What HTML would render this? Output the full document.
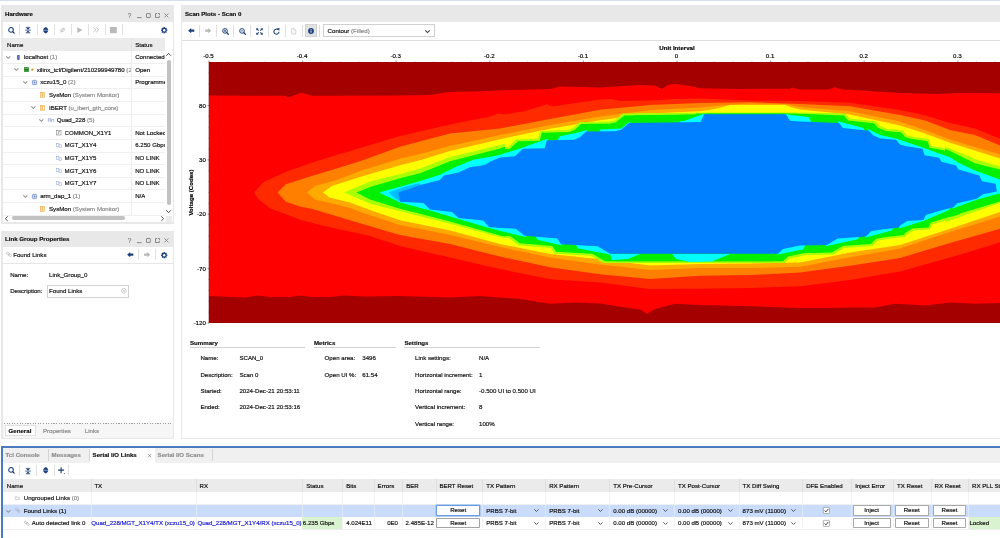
<!DOCTYPE html>
<html><head><meta charset="utf-8"><title>Vivado - Serial I/O Analyzer</title>
<style>

*{box-sizing:border-box}
html,body{margin:0;padding:0}
body{width:1000px;height:538px;overflow:hidden;background:#fff;position:relative;
 font-family:"Liberation Sans",sans-serif;font-size:6.12px;color:#111;line-height:1;-webkit-font-smoothing:antialiased;-webkit-text-stroke:0.18px}
#root{position:absolute;left:0;top:0;width:1000px;height:538px;overflow:hidden;will-change:transform}
#topline{position:absolute;left:0;top:0;width:1000px;height:1.3px;background:#d6deeb}
.abs{position:absolute}
.t{position:absolute;white-space:nowrap;line-height:8px;height:8px}
.b{font-weight:bold}
.g{color:#8a8a8a}
.panel{position:absolute;background:#e8e8e8}
.white{position:absolute;background:#fff}
.ptitle{position:absolute;font-weight:bold;white-space:nowrap;line-height:8px;color:#111}
.vsep{position:absolute;width:0.8px;background:#e0e0e0}
.hline{position:absolute;height:0.6px;background:#efefef}
.hdr{position:absolute;background:#ebebeb}
.colsep{position:absolute;width:0.6px;background:#e3e3e3}
.link{color:#1a1acd}
.btn{position:absolute;height:10.5px;border:0.65px solid #a9a9a9;border-radius:0.8px;background:#fff;text-align:center;line-height:8.7px;font-size:6.12px}
.winic{position:absolute;top:10.2px;color:#8c8c8c}
svg{overflow:visible}

</style></head>
<body>
<div id="root">
<div id="topline"></div>
<div class="panel" style="left:1.2px;top:5.1px;width:173.2px;height:218.6px"></div>
<div class="white" style="left:2.6px;top:22px;width:170.6px;height:199.9px"></div>
<div class="ptitle" style="left:5px;top:9.6px">Hardware</div>
<div class="t " style="left:127.8px;top:11.50px;color:#848484;font-size:6.5px">?</div><svg class="abs" style="left:136.5px;top:17.2px" width="4.6" height="1.2" viewBox="0 0 4.6 1.2"><path d="M0 0.6H4.6" stroke="#848484" stroke-width="0.95"/></svg><svg class="abs" style="left:145.6px;top:12.9px" width="4.8" height="5" viewBox="0 0 4.8 5"><rect x="0.5" y="0.5" width="3.8" height="4" rx="0.4" fill="none" stroke="#848484" stroke-width="0.95"/></svg><svg class="abs" style="left:154.9px;top:12.9px" width="5" height="5" viewBox="0 0 5 5"><path d="M2.1 0.6H0.5V4.5H4.3V2.8" fill="none" stroke="#848484" stroke-width="0.95"/><path d="M2.9 0.5H4.5V2.1" fill="none" stroke="#848484" stroke-width="0.9"/></svg><svg class="abs" style="left:164.0px;top:13.1px" width="4.8" height="4.8" viewBox="0 0 4.8 4.8"><path d="M0.4 0.4L4.4 4.4M4.4 0.4L0.4 4.4" stroke="#848484" stroke-width="0.9"/></svg>
<svg class="abs" style="left:7.699999999999999px;top:26.5px" width="7" height="6.8" viewBox="0 0 7 6.8"><circle cx="3" cy="2.9" r="2.3" fill="none" stroke="#1c3f7c" stroke-width="1.05"/><path d="M4.8 4.7L6.2 6.1" stroke="#1c3f7c" stroke-width="1.3" stroke-linecap="round"/></svg>
<svg class="abs" style="left:25.3px;top:26.799999999999997px" width="6" height="6.2" viewBox="0 0 6 6.2"><path d="M0.7 0.35H5.3M0.7 5.85H5.3" stroke="#1c3f7c" stroke-width="0.7"/><path d="M1 0.7H5L3 2.7ZM1 5.5H5L3 3.5Z" fill="#1c3f7c"/><path d="M0.1 3.1H5.9" stroke="#1c3f7c" stroke-width="0.75"/></svg>
<svg class="abs" style="left:42.599999999999994px;top:26.599999999999998px" width="5.4" height="6.6" viewBox="0 0 5.4 6.6"><path d="M2.7 0.1C4.6 1 5.2 2.3 5.2 3.3C5.2 4.3 4.6 5.6 2.7 6.5C0.8 5.6 0.2 4.3 0.2 3.3C0.2 2.3 0.8 1 2.7 0.1Z" fill="#1c3f7c"/><path d="M0.2 3.3H5.2" stroke="#8ea3cc" stroke-width="0.9"/></svg>
<svg class="abs" style="left:58.6px;top:26.7px" width="7" height="6.4" viewBox="0 0 7 6.4"><ellipse cx="3.5" cy="3.2" rx="1.9" ry="1.4" fill="none" stroke="#b9b9b9" stroke-width="0.8" transform="rotate(-35 3.5 3.2)"/><path d="M0.6 5.9L6.4 0.5" stroke="#b9b9b9" stroke-width="0.55"/></svg>
<svg class="abs" style="left:76.8px;top:26.799999999999997px" width="5.6" height="6.2" viewBox="0 0 5.6 6.2"><path d="M0.3 0.2L5.4 3.1L0.3 6Z" fill="#b9b9b9"/></svg>
<svg class="abs" style="left:93.4px;top:27.2px" width="6.4" height="5.4" viewBox="0 0 6.4 5.4"><path d="M0.4 0.3L2.9 2.7L0.4 5.1M3.3 0.3L5.8 2.7L3.3 5.1" fill="none" stroke="#b9b9b9" stroke-width="0.95"/></svg>
<svg class="abs" style="left:110.4px;top:26.799999999999997px" width="6.8" height="6.2" viewBox="0 0 6.8 6.2"><rect width="6.8" height="6.2" fill="#b9b9b9"/></svg>
<div class="vsep" style="left:19.4px;top:24px;height:10.6px"></div>
<div class="vsep" style="left:36.5px;top:24px;height:10.6px"></div>
<div class="vsep" style="left:53.6px;top:24px;height:10.6px"></div>
<div class="vsep" style="left:70.7px;top:24px;height:10.6px"></div>
<div class="vsep" style="left:87.8px;top:24px;height:10.6px"></div>
<div class="vsep" style="left:104.9px;top:24px;height:10.6px"></div>
<div class="vsep" style="left:122.0px;top:24px;height:10.6px"></div>
<svg class="abs" style="left:160.9px;top:26.8px" width="6.4" height="6.4" viewBox="0 0 6.4 6.4"><g transform="translate(3.2 3.2)"><rect x="-0.7" y="-3.15" width="1.4" height="6.3" transform="rotate(0)" fill="#1c3f7c"/><rect x="-0.7" y="-3.15" width="1.4" height="6.3" transform="rotate(45)" fill="#1c3f7c"/><rect x="-0.7" y="-3.15" width="1.4" height="6.3" transform="rotate(90)" fill="#1c3f7c"/><rect x="-0.7" y="-3.15" width="1.4" height="6.3" transform="rotate(135)" fill="#1c3f7c"/><circle r="2.4" fill="#1c3f7c"/><circle r="1.2" fill="#fff"/></g></svg>
<div class="hdr" style="left:2.6px;top:37.9px;width:162.6px;height:12.7px"></div>
<div class="colsep" style="left:131.1px;top:37.9px;height:177px;background:#ececec"></div>
<div class="colsep" style="left:131.1px;top:37.9px;height:12.7px;background:#e0e0e0"></div>
<div class="t " style="left:7px;top:40.90px;">Name</div>
<div class="t " style="left:135.2px;top:40.90px;">Status</div>
<svg class="abs" style="left:5.968px;top:55.722px" width="4.664000000000001" height="2.7560000000000002" viewBox="0 0 4.4 2.6"><path d="M0.3 0.3L2.2 2.2L4.1 0.3" fill="none" stroke="#909090" stroke-width="0.95"/></svg>
<svg class="abs" style="left:17px;top:54.5px" width="2.8" height="4.8" viewBox="0 0 2.8 4.8"><rect x="0.2" y="0" width="2.4" height="4.8" rx="0.4" fill="#2f4fa0"/><rect x="1" y="0.6" width="0.7" height="2.8" fill="#7f97d4"/></svg>
<div class="t" style="left:24px;top:52.90px;max-width:107.0px;overflow:hidden">localhost <span class="g">(1)</span></div>
<div class="t" style="left:135.2px;top:52.90px;max-width:29.8px;overflow:hidden">Connected</div>
<div class="hline" style="left:2.6px;top:62.95px;width:162.6px"></div>
<svg class="abs" style="left:14.468px;top:68.372px" width="4.664000000000001" height="2.7560000000000002" viewBox="0 0 4.4 2.6"><path d="M0.3 0.3L2.2 2.2L4.1 0.3" fill="none" stroke="#909090" stroke-width="0.95"/></svg>
<svg class="abs" style="left:23.8px;top:67.05px" width="11" height="5" viewBox="0 0 11 5"><rect x="0" y="0.05" width="4.9" height="4.9" fill="#3c9a3c"/><rect x="0.6" y="0.7" width="3.7" height="0.8" fill="#6fbf6f"/><rect x="0.5" y="2.1" width="3.9" height="0.8" fill="#1d5f1d"/><ellipse cx="8.4" cy="2.7" rx="1.35" ry="1" fill="#d9952b" transform="rotate(-30 8.4 2.7)"/></svg>
<div class="t" style="left:36.7px;top:65.55px;max-width:94.3px;overflow:hidden">xilinx_tcf/Digilent/210299949780 <span class="g">(2</span></div>
<div class="t" style="left:135.2px;top:65.55px;max-width:29.8px;overflow:hidden">Open</div>
<div class="hline" style="left:2.6px;top:75.60px;width:162.6px"></div>
<svg class="abs" style="left:22.668px;top:81.022px" width="4.664000000000001" height="2.7560000000000002" viewBox="0 0 4.4 2.6"><path d="M0.3 0.3L2.2 2.2L4.1 0.3" fill="none" stroke="#909090" stroke-width="0.95"/></svg>
<svg class="abs" style="left:31.8px;top:79.7px" width="5" height="5" viewBox="0 0 5 5"><rect x="0.35" y="0.35" width="4.3" height="4.3" rx="1.2" fill="#eef2fb" stroke="#4f70b6" stroke-width="0.7"/><rect x="1.6" y="1.6" width="1.8" height="1.8" fill="#6685c4"/></svg>
<div class="t" style="left:40.2px;top:78.20px;max-width:90.8px;overflow:hidden">xczu15_0 <span class="g">(2)</span></div>
<div class="t" style="left:135.2px;top:78.20px;max-width:29.8px;overflow:hidden">Programme</div>
<div class="hline" style="left:2.6px;top:88.25px;width:162.6px"></div>
<svg class="abs" style="left:40.2px;top:92.05000000000001px" width="4.6" height="5.6" viewBox="0 0 4.6 5.6"><rect x="0.3" y="0.3" width="4" height="5" fill="#fdeccb" stroke="#f0a93f" stroke-width="0.6"/><path d="M2.3 1.2V4.4" stroke="#e8992a" stroke-width="0.7"/><path d="M1.4 1.3H3.2M1.4 4.3H3.2" stroke="#eeb255" stroke-width="0.5"/></svg>
<div class="t" style="left:49px;top:90.85px;max-width:82.0px;overflow:hidden">SysMon <span class="g">(System Monitor)</span></div>
<div class="hline" style="left:2.6px;top:100.90px;width:162.6px"></div>
<svg class="abs" style="left:31.067999999999998px;top:106.322px" width="4.664000000000001" height="2.7560000000000002" viewBox="0 0 4.4 2.6"><path d="M0.3 0.3L2.2 2.2L4.1 0.3" fill="none" stroke="#909090" stroke-width="0.95"/></svg>
<svg class="abs" style="left:40.2px;top:104.7px" width="4.6" height="5.6" viewBox="0 0 4.6 5.6"><rect x="0.3" y="0.3" width="4" height="5" fill="#fdeccb" stroke="#f0a93f" stroke-width="0.6"/><path d="M2.3 1.2V4.4" stroke="#e8992a" stroke-width="0.7"/><path d="M1.4 1.3H3.2M1.4 4.3H3.2" stroke="#eeb255" stroke-width="0.5"/></svg>
<div class="t" style="left:49px;top:103.50px;max-width:82.0px;overflow:hidden">IBERT <span class="g">(u_ibert_gth_core)</span></div>
<div class="hline" style="left:2.6px;top:113.55px;width:162.6px"></div>
<svg class="abs" style="left:39.368px;top:118.972px" width="4.664000000000001" height="2.7560000000000002" viewBox="0 0 4.4 2.6"><path d="M0.3 0.3L2.2 2.2L4.1 0.3" fill="none" stroke="#909090" stroke-width="0.95"/></svg>
<svg class="abs" style="left:47.6px;top:117.85px" width="6.2" height="4.6" viewBox="0 0 6.2 4.6"><path d="M0.3 3.9V0.6H2.7V3.9M3.5 3.9V1.6H5.9V3.9" fill="none" stroke="#8fa3cf" stroke-width="0.7"/><path d="M0.3 2.2H2.7" stroke="#8fa3cf" stroke-width="0.5"/></svg>
<div class="t" style="left:56.8px;top:116.15px;max-width:74.2px;overflow:hidden">Quad_228 <span class="g">(5)</span></div>
<div class="hline" style="left:2.6px;top:126.20px;width:162.6px"></div>
<svg class="abs" style="left:56.4px;top:130.10000000000002px" width="5.4" height="5.4" viewBox="0 0 5.4 5.4"><rect x="0.35" y="0.35" width="4.7" height="4.7" fill="#fff" stroke="#8c8c8c" stroke-width="0.6"/><path d="M1.5 3.9H2.7V1.5H3.9" fill="none" stroke="#6c6c6c" stroke-width="0.6"/></svg>
<div class="t" style="left:64.6px;top:128.80px;max-width:66.4px;overflow:hidden">COMMON_X1Y1</div>
<div class="t" style="left:135.2px;top:128.80px;max-width:29.8px;overflow:hidden">Not Locked</div>
<div class="hline" style="left:2.6px;top:138.85px;width:162.6px"></div>
<svg class="abs" style="left:55.6px;top:142.95000000000002px" width="6" height="5" viewBox="0 0 6 5"><rect x="0.3" y="0.3" width="2.6" height="3" fill="none" stroke="#9fb0d6" stroke-width="0.6"/><rect x="3" y="1.8" width="2.6" height="2.8" fill="none" stroke="#9fb0d6" stroke-width="0.6"/></svg>
<div class="t" style="left:64.6px;top:141.45px;max-width:66.4px;overflow:hidden">MGT_X1Y4</div>
<div class="t" style="left:135.2px;top:141.45px;max-width:29.8px;overflow:hidden">6.250 Gbps</div>
<div class="hline" style="left:2.6px;top:151.50px;width:162.6px"></div>
<svg class="abs" style="left:55.6px;top:155.60000000000002px" width="6" height="5" viewBox="0 0 6 5"><rect x="0.3" y="0.3" width="2.6" height="3" fill="none" stroke="#9fb0d6" stroke-width="0.6"/><rect x="3" y="1.8" width="2.6" height="2.8" fill="none" stroke="#9fb0d6" stroke-width="0.6"/></svg>
<div class="t" style="left:64.6px;top:154.10px;max-width:66.4px;overflow:hidden">MGT_X1Y5</div>
<div class="t" style="left:135.2px;top:154.10px;max-width:29.8px;overflow:hidden">NO LINK</div>
<div class="hline" style="left:2.6px;top:164.15px;width:162.6px"></div>
<svg class="abs" style="left:55.6px;top:168.25000000000003px" width="6" height="5" viewBox="0 0 6 5"><rect x="0.3" y="0.3" width="2.6" height="3" fill="none" stroke="#9fb0d6" stroke-width="0.6"/><rect x="3" y="1.8" width="2.6" height="2.8" fill="none" stroke="#9fb0d6" stroke-width="0.6"/></svg>
<div class="t" style="left:64.6px;top:166.75px;max-width:66.4px;overflow:hidden">MGT_X1Y6</div>
<div class="t" style="left:135.2px;top:166.75px;max-width:29.8px;overflow:hidden">NO LINK</div>
<div class="hline" style="left:2.6px;top:176.80px;width:162.6px"></div>
<svg class="abs" style="left:55.6px;top:180.9px" width="6" height="5" viewBox="0 0 6 5"><rect x="0.3" y="0.3" width="2.6" height="3" fill="none" stroke="#9fb0d6" stroke-width="0.6"/><rect x="3" y="1.8" width="2.6" height="2.8" fill="none" stroke="#9fb0d6" stroke-width="0.6"/></svg>
<div class="t" style="left:64.6px;top:179.40px;max-width:66.4px;overflow:hidden">MGT_X1Y7</div>
<div class="t" style="left:135.2px;top:179.40px;max-width:29.8px;overflow:hidden">NO LINK</div>
<div class="hline" style="left:2.6px;top:189.45px;width:162.6px"></div>
<svg class="abs" style="left:22.668px;top:194.872px" width="4.664000000000001" height="2.7560000000000002" viewBox="0 0 4.4 2.6"><path d="M0.3 0.3L2.2 2.2L4.1 0.3" fill="none" stroke="#909090" stroke-width="0.95"/></svg>
<svg class="abs" style="left:31.8px;top:193.55px" width="5" height="5" viewBox="0 0 5 5"><rect x="0.35" y="0.35" width="4.3" height="4.3" rx="1.2" fill="#eef2fb" stroke="#4f70b6" stroke-width="0.7"/><rect x="1.6" y="1.6" width="1.8" height="1.8" fill="#6685c4"/></svg>
<div class="t" style="left:40.2px;top:192.05px;max-width:90.8px;overflow:hidden">arm_dap_1 <span class="g">(1)</span></div>
<div class="t" style="left:135.2px;top:192.05px;max-width:29.8px;overflow:hidden">N/A</div>
<div class="hline" style="left:2.6px;top:202.10px;width:162.6px"></div>
<svg class="abs" style="left:40.2px;top:205.9px" width="4.6" height="5.6" viewBox="0 0 4.6 5.6"><rect x="0.3" y="0.3" width="4" height="5" fill="#fdeccb" stroke="#f0a93f" stroke-width="0.6"/><path d="M2.3 1.2V4.4" stroke="#e8992a" stroke-width="0.7"/><path d="M1.4 1.3H3.2M1.4 4.3H3.2" stroke="#eeb255" stroke-width="0.5"/></svg>
<div class="t" style="left:49px;top:204.70px;max-width:82.0px;overflow:hidden">SysMon <span class="g">(System Monitor)</span></div>
<div class="hline" style="left:2.6px;top:214.75px;width:162.6px"></div>
<svg class="abs" style="left:166.4px;top:52.8px" width="5.2" height="3" viewBox="0 0 5.2 3"><path d="M0.3 2.7L2.6 0.4L4.9 2.7" fill="none" stroke="#3c3c3c" stroke-width="0.9"/></svg>
<div class="abs" style="left:167.2px;top:60px;width:3.6px;height:145px;background:#c2c2c2;border-radius:1.8px"></div>
<svg class="abs" style="left:166.4px;top:209.6px" width="5.2" height="3" viewBox="0 0 5.2 3"><path d="M0.3 0.3L2.6 2.6L4.9 0.3" fill="none" stroke="#3c3c3c" stroke-width="0.9"/></svg>
<div class="abs" style="left:165.8px;top:215.6px;width:6px;height:6.3px;background:#ebebeb"></div>
<svg class="abs" style="left:5.2px;top:215.9px" width="3" height="5.2" viewBox="0 0 3 5.2"><path d="M2.7 0.3L0.4 2.6L2.7 4.9" fill="none" stroke="#3c3c3c" stroke-width="0.9"/></svg>
<div class="abs" style="left:11.6px;top:216.3px;width:113px;height:3.6px;background:#c2c2c2;border-radius:1.8px"></div>
<svg class="abs" style="left:160.6px;top:215.9px" width="3" height="5.2" viewBox="0 0 3 5.2"><path d="M0.3 0.3L2.6 2.6L0.3 4.9" fill="none" stroke="#3c3c3c" stroke-width="0.9"/></svg>
<div class="panel" style="left:1.2px;top:231px;width:173.2px;height:208px"></div>
<div class="white" style="left:2.6px;top:247px;width:170.6px;height:176.4px"></div>
<div class="abs" style="left:2.6px;top:423.4px;width:170.6px;height:14.2px;background:#f6f6f6"></div>
<div class="ptitle" style="left:5px;top:235px">Link Group Properties</div>
<div class="t " style="left:127.8px;top:236.60px;color:#848484;font-size:6.5px">?</div><svg class="abs" style="left:136.5px;top:242.29999999999998px" width="4.6" height="1.2" viewBox="0 0 4.6 1.2"><path d="M0 0.6H4.6" stroke="#848484" stroke-width="0.95"/></svg><svg class="abs" style="left:145.6px;top:238.0px" width="4.8" height="5" viewBox="0 0 4.8 5"><rect x="0.5" y="0.5" width="3.8" height="4" rx="0.4" fill="none" stroke="#848484" stroke-width="0.95"/></svg><svg class="abs" style="left:154.9px;top:238.0px" width="5" height="5" viewBox="0 0 5 5"><path d="M2.1 0.6H0.5V4.5H4.3V2.8" fill="none" stroke="#848484" stroke-width="0.95"/><path d="M2.9 0.5H4.5V2.1" fill="none" stroke="#848484" stroke-width="0.9"/></svg><svg class="abs" style="left:164.0px;top:238.2px" width="4.8" height="4.8" viewBox="0 0 4.8 4.8"><path d="M0.4 0.4L4.4 4.4M4.4 0.4L0.4 4.4" stroke="#848484" stroke-width="0.9"/></svg>
<svg class="abs" style="left:6.2px;top:252.2px" width="6" height="4.8" viewBox="0 0 6 4.8"><rect x="0.3" y="0.5" width="3.2" height="2" rx="1" fill="none" stroke="#a9a9a9" stroke-width="0.6" transform="rotate(35 1.9 1.5)"/><rect x="2.4" y="2.2" width="3.2" height="2" rx="1" fill="none" stroke="#a9a9a9" stroke-width="0.6" transform="rotate(35 4 3.2)"/></svg>
<div class="t " style="left:13.2px;top:250.60px;">Found Links</div>
<svg class="abs" style="left:126.99999999999999px;top:252.0px" width="6.4" height="5.4" viewBox="0 0 6.4 5.4"><path d="M0.1 2.7L3.2 0.1V1.55H6.3V3.85H3.2V5.3Z" fill="#1c3f7c"/></svg>
<svg class="abs" style="left:143.8px;top:252.0px" width="6.4" height="5.4" viewBox="0 0 6.4 5.4"><path d="M6.3 2.7L3.2 0.1V1.55H0.1V3.85H3.2V5.3Z" fill="#b9b9b9"/></svg>
<svg class="abs" style="left:160.9px;top:251.5px" width="6.4" height="6.4" viewBox="0 0 6.4 6.4"><g transform="translate(3.2 3.2)"><rect x="-0.7" y="-3.15" width="1.4" height="6.3" transform="rotate(0)" fill="#1c3f7c"/><rect x="-0.7" y="-3.15" width="1.4" height="6.3" transform="rotate(45)" fill="#1c3f7c"/><rect x="-0.7" y="-3.15" width="1.4" height="6.3" transform="rotate(90)" fill="#1c3f7c"/><rect x="-0.7" y="-3.15" width="1.4" height="6.3" transform="rotate(135)" fill="#1c3f7c"/><circle r="2.4" fill="#1c3f7c"/><circle r="1.2" fill="#fff"/></g></svg>
<div class="vsep" style="left:138px;top:249.4px;height:10.4px"></div>
<div class="vsep" style="left:155px;top:249.4px;height:10.4px"></div>
<div class="abs" style="left:2.6px;top:263.1px;width:170.6px;height:0.6px;background:#e6e6e6"></div>
<div class="t " style="left:10.2px;top:271.20px;">Name:</div>
<div class="t " style="left:49px;top:271.20px;">Link_Group_0</div>
<div class="t " style="left:10.2px;top:287.20px;">Description:</div>
<div class="abs" style="left:47.3px;top:284.5px;width:81.9px;height:13px;border:0.7px solid #d2d2d2;background:#fff"></div>
<div class="t " style="left:49px;top:287.20px;">Found Links</div>
<svg class="abs" style="left:121.2px;top:288.4px" width="5.6" height="5.6" viewBox="0 0 5.6 5.6"><circle cx="2.8" cy="2.8" r="2.4" fill="none" stroke="#b0b0b0" stroke-width="0.6"/><path d="M1.7 1.7L3.9 3.9M3.9 1.7L1.7 3.9" stroke="#b0b0b0" stroke-width="0.6"/></svg>
<div class="abs" style="left:4.6px;top:424.5px;width:31.2px;height:11.4px;background:#fff;border:0.5px solid #e0e0e0"></div>
<div class="abs" style="left:3.6px;top:423.2px;width:167.6px;height:0.7px;background:repeating-linear-gradient(90deg,#9c9c9c 0,#9c9c9c 1.1px,transparent 1.1px,transparent 2.6px)"></div>
<div class="t b" style="left:8.6px;top:426.50px;">General</div>
<div class="t g" style="left:43px;top:426.50px;">Properties</div>
<div class="t g" style="left:84.8px;top:426.50px;">Links</div>
<div class="panel" style="left:180.8px;top:5.1px;width:830px;height:433.9px"></div>
<div class="white" style="left:182.2px;top:22px;width:830px;height:415.6px"></div>
<div class="ptitle" style="left:185px;top:9.6px">Scan Plots - Scan 0</div>
<svg class="abs" style="left:187.8px;top:28.3px" width="6.4" height="5.4" viewBox="0 0 6.4 5.4"><path d="M0.1 2.7L3.2 0.1V1.55H6.3V3.85H3.2V5.3Z" fill="#1c3f7c"/></svg>
<svg class="abs" style="left:204.60000000000002px;top:28.3px" width="6.4" height="5.4" viewBox="0 0 6.4 5.4"><path d="M6.3 2.7L3.2 0.1V1.55H0.1V3.85H3.2V5.3Z" fill="#b9b9b9"/></svg>
<svg class="abs" style="left:221.8px;top:27.6px" width="7" height="6.8" viewBox="0 0 7 6.8"><circle cx="3" cy="2.9" r="2.35" fill="none" stroke="#1c3f7c" stroke-width="0.95"/><path d="M4.9 4.8L6.3 6.2" stroke="#1c3f7c" stroke-width="1.3" stroke-linecap="round"/><path d="M1.7 2.9H4.3" stroke="#1c3f7c" stroke-width="0.75"/><path d="M3 1.6V4.2" stroke="#1c3f7c" stroke-width="0.75"/></svg>
<svg class="abs" style="left:238.9px;top:27.6px" width="7" height="6.8" viewBox="0 0 7 6.8"><circle cx="3" cy="2.9" r="2.35" fill="none" stroke="#1c3f7c" stroke-width="0.95"/><path d="M4.9 4.8L6.3 6.2" stroke="#1c3f7c" stroke-width="1.3" stroke-linecap="round"/><path d="M1.7 2.9H4.3" stroke="#1c3f7c" stroke-width="0.75"/></svg>
<svg class="abs" style="left:256.0px;top:27.5px" width="7" height="7" viewBox="0 0 7 7"><g transform="scale(1.1667)"><path d="M0.2 0.2H2.2L1.5 0.9L2.6 2L2 2.6L0.9 1.5L0.2 2.2ZM5.8 0.2V2.2L5.1 1.5L4 2.6L3.4 2L4.5 0.9L3.8 0.2ZM0.2 5.8V3.8L0.9 4.5L2 3.4L2.6 4L1.5 5.1L2.2 5.8ZM5.8 5.8H3.8L4.5 5.1L3.4 4L4 3.4L5.1 4.5L5.8 3.8Z" fill="#1c3f7c"/></g></svg>
<svg class="abs" style="left:273.1px;top:27.5px" width="7" height="7" viewBox="0 0 7 7"><path d="M6 3.7A2.55 2.55 0 1 1 5 1.6" fill="none" stroke="#1c3f7c" stroke-width="1.05"/><path d="M3.9 0.1L6.6 0.3L6.2 3Z" fill="#1c3f7c"/></svg>
<svg class="abs" style="left:290.59999999999997px;top:27.8px" width="5.2" height="6.4" viewBox="0 0 5.2 6.4"><path d="M0.4 0.4H3L4.8 2.2V6H0.4Z" fill="#f7f7f7" stroke="#c4c4c4" stroke-width="0.6"/><path d="M3 0.4V2.2H4.8" fill="none" stroke="#c4c4c4" stroke-width="0.5"/></svg>
<div class="abs" style="left:305.2px;top:24.3px;width:11.4px;height:13.2px;background:#e2e2e2;border:0.5px solid #d2d2d2"></div>
<svg class="abs" style="left:307.8px;top:28px" width="6" height="6" viewBox="0 0 6 6"><circle cx="3" cy="3" r="2.9" fill="#1c3f7c"/><rect x="2.55" y="2.5" width="0.9" height="2.2" fill="#fff"/><rect x="2.55" y="1.2" width="0.9" height="0.9" fill="#fff"/></svg>
<div class="vsep" style="left:198.8px;top:24.8px;height:12px"></div>
<div class="vsep" style="left:216.0px;top:24.8px;height:12px"></div>
<div class="vsep" style="left:233.1px;top:24.8px;height:12px"></div>
<div class="vsep" style="left:250.3px;top:24.8px;height:12px"></div>
<div class="vsep" style="left:267.5px;top:24.8px;height:12px"></div>
<div class="vsep" style="left:284.7px;top:24.8px;height:12px"></div>
<div class="vsep" style="left:301.8px;top:24.8px;height:12px"></div>
<div class="vsep" style="left:319.0px;top:24.8px;height:12px"></div>
<div class="abs" style="left:323.3px;top:23.9px;width:111.8px;height:13.6px;border:0.7px solid #d0d0d0;background:#fff"></div>
<div class="t " style="left:327.6px;top:27.00px;">Contour <span class="g">(Filled)</span></div>
<svg class="abs" style="left:425.07000000000005px;top:29.904999999999998px" width="5.06" height="2.9899999999999998" viewBox="0 0 4.4 2.6"><path d="M0.3 0.3L2.2 2.2L4.1 0.3" fill="none" stroke="#3a3a3a" stroke-width="0.9"/></svg>
<div class="abs" style="left:182px;top:39.5px;width:830px;height:0.6px;background:#dedede"></div>
<svg id="plot" width="1000" height="538" viewBox="0 0 1000 538" style="position:absolute;left:0;top:0">
<defs><clipPath id="pc"><rect x="209" y="62" width="800" height="261"/></clipPath></defs>
<g clip-path="url(#pc)">
<rect x="209" y="62" width="800" height="261" fill="#ff0000"/>
<polygon fill="#a50000" points="209,62 209.0,95.5 285.0,95.8 288.0,97.5 301.0,92.8 312.0,95.8 400.0,95.5 430.0,95.0 449.0,92.0 475.0,91.5 512.0,90.0 550.0,89.0 560.0,86.5 600.0,87.6 640.0,85.0 655.0,85.5 662.0,88.9 668.0,85.0 675.0,83.7 690.0,86.0 700.0,88.2 740.0,88.9 790.0,88.8 792.0,87.5 800.0,89.5 828.0,89.5 835.0,87.2 842.0,89.5 850.0,89.8 875.0,91.5 900.0,93.0 937.0,94.0 960.0,93.0 1000.0,93.2 1000,62"/>
<polygon fill="#a50000" points="209,323 209.0,296.0 245.0,297.5 258.0,295.5 270.0,297.0 290.0,297.0 300.0,295.5 312.0,297.0 330.0,297.0 345.0,295.5 365.0,296.5 400.0,296.0 450.0,297.5 480.0,296.0 520.0,299.0 550.0,303.8 575.0,302.5 600.0,303.5 625.0,307.5 640.0,309.5 647.0,313.8 655.0,309.0 675.0,303.8 700.0,305.0 750.0,306.3 800.0,308.0 825.0,308.0 850.0,307.5 875.0,307.5 895.0,303.8 910.0,304.5 925.0,305.5 950.0,302.5 975.0,303.8 1000.0,303.0 1000,323"/>
<clipPath id="cy"><rect x="374" y="140" width="131" height="100"/><rect x="988" y="170" width="30" height="40"/><polygon points="489.9,165.2 501.9,139.8 524.0,139.8 524.0,165.2"/><polygon points="519.6,157.3 531.6,131.2 547.8,131.2 547.8,157.3"/><polygon points="554.5,146.5 566.5,122.6 587.2,122.6 587.2,146.5"/><polygon points="596.0,138.7 608.0,113.9 630.3,113.9 630.3,138.7"/><polygon points="675.7,131.1 687.7,105.3 705.0,105.3 705.0,131.1"/><polygon points="785.0,129.7 785.0,105.2 803.0,105.2 815.0,129.7"/><polygon points="838.0,137.0 838.0,113.9 856.0,113.9 868.0,137.0"/><polygon points="868.0,144.3 868.0,121.7 886.0,121.7 898.0,144.3"/><polygon points="895.0,153.4 895.0,130.8 913.0,130.8 925.0,153.4"/><polygon points="921.5,164.2 921.5,139.8 937.7,139.8 949.7,164.2"/><polygon points="938.0,170.7 938.0,148.8 954.6,148.8 966.6,170.7"/><polygon points="955.0,178.5 955.0,156.6 971.5,156.6 983.5,178.5"/><polygon points="978.3,190.2 978.3,166.4 995.0,166.4 1007.0,190.2"/><polygon points="994.6,200.6 994.6,174.8 1009.9,174.8 1021.9,200.6"/><polygon points="502.6,244.8 490.6,219.7 525.7,219.7 525.7,244.8"/><polygon points="544.2,253.3 532.2,229.4 562.0,229.4 562.0,253.3"/><polygon points="584.5,262.7 572.5,237.2 611.0,237.2 611.0,262.7"/><polygon points="777.0,262.7 777.0,240.0 808.0,240.0 796.0,262.7"/><polygon points="826.0,254.0 826.0,229.4 862.7,229.4 850.7,254.0"/><polygon points="865.0,245.5 865.0,222.3 896.0,222.3 884.0,245.5"/><polygon points="899.0,234.4 899.0,212.0 932.5,212.0 920.5,234.4"/><polygon points="922.4,229.0 922.4,206.0 951.0,206.0 939.0,229.0"/><polygon points="952.3,216.2 952.3,194.3 982.2,194.3 970.2,216.2"/><polygon points="975.7,207.8 975.7,185.2 1008.2,185.2 996.2,207.8"/></clipPath>
<clipPath id="cleft"><rect x="209" y="62" width="296" height="261"/><rect x="945" y="62" width="80" height="261"/></clipPath>
<clipPath id="cg6"><rect x="504.5" y="112.7" width="520" height="150.2"/></clipPath>
<clipPath id="cg7"><rect x="504.5" y="113.5" width="520" height="148.9"/></clipPath>
<polygon fill="#ff2a00" points="254.0,192.6 264.0,181.8 288.0,171.0 318.5,160.6 360.0,148.0 400.0,136.0 450.0,124.5 475.0,119.5 490.0,116.5 498.0,113.5 505.0,114.5 525.0,111.0 547.0,104.2 553.0,106.5 562.0,105.0 600.0,99.6 612.0,99.0 620.0,101.0 650.0,100.5 675.0,99.0 700.0,98.5 750.0,100.5 800.0,101.0 850.0,102.8 900.0,110.0 925.0,115.3 950.0,123.1 975.0,128.5 1000.0,138.8 1012.0,142.5 1012.0,239.0 1000.0,242.5 950.0,257.6 900.0,271.6 850.0,280.0 800.0,286.2 750.0,288.0 700.0,288.8 650.0,289.0 600.0,282.6 550.0,279.3 500.0,269.0 450.0,257.6 400.0,246.0 370.0,236.0 322.0,225.5 300.0,219.8 294.4,217.5 270.0,208.3 258.0,198.7"/>
<polygon fill="#ff8000" points="277.5,192.6 286.0,184.2 312.5,175.7 336.7,168.5 360.0,161.2 400.0,146.8 450.0,133.5 500.0,128.5 550.0,119.0 600.0,109.8 650.0,105.0 700.0,103.0 750.0,102.2 800.0,104.0 850.0,106.3 900.0,115.0 925.0,120.5 950.0,129.9 975.0,135.0 1000.0,145.5 1012.0,149.0 1012.0,225.5 1000.0,228.8 950.0,243.0 900.0,258.0 850.0,265.7 800.0,272.5 750.0,275.0 700.0,275.8 650.0,279.0 600.0,274.2 550.0,267.2 500.0,256.6 450.0,244.0 400.0,235.0 360.0,223.2 336.7,216.2 312.5,209.0 300.0,206.4 286.0,201.8"/>
<polygon fill="#ffaa00" points="307.0,192.6 315.0,186.0 336.7,180.0 360.0,171.0 400.0,158.8 420.0,154.0 450.0,146.0 500.0,135.0 550.0,125.0 600.0,116.5 650.0,110.3 700.0,107.5 725.0,105.0 750.0,103.5 785.0,104.0 800.0,107.0 850.0,111.2 900.0,121.5 925.0,130.0 950.0,139.4 1000.0,154.4 1012.0,158.0 1012.0,213.0 1000.0,216.5 950.0,232.0 900.0,248.5 850.0,257.3 800.0,266.7 750.0,268.0 700.0,268.0 650.0,270.0 600.0,264.4 550.0,257.4 500.0,247.0 450.0,234.8 400.0,225.0 360.0,211.8 350.0,208.0 336.7,204.6 315.0,199.5"/>
<polygon fill="#ffff00" points="323.0,192.6 331.8,186.0 360.0,177.0 400.0,165.3 420.0,160.2 450.0,151.0 500.0,139.2 550.0,128.8 600.0,120.2 650.0,113.5 700.0,111.3 715.0,109.0 730.0,105.0 785.0,105.0 792.0,107.5 800.0,109.5 850.0,114.5 900.0,125.5 925.0,133.5 950.0,142.7 1000.0,158.4 1012.0,162.0 1012.0,208.5 1000.0,212.0 950.0,228.8 900.0,245.0 850.0,252.6 800.0,262.6 750.0,263.5 700.0,264.0 650.0,265.4 600.0,259.2 550.0,254.0 500.0,244.0 450.0,230.6 400.0,220.3 370.0,210.0 350.0,202.5 329.4,197.6"/>
<polygon fill="#aaff00" points="344.0,192.6 370.0,181.5 400.0,174.0 420.0,168.5 450.0,157.0 500.0,145.0 550.0,131.0 600.0,122.0 650.0,115.5 700.0,113.2 750.0,112.8 800.0,113.0 850.0,120.0 900.0,130.5 925.0,139.5 950.0,148.4 975.0,159.1 1000.0,166.5 1012.0,170.0 1012.0,199.5 1000.0,203.0 950.0,220.4 900.0,236.8 850.0,245.8 800.0,255.6 778.0,259.0 750.0,262.0 700.0,262.3 650.0,262.0 620.0,259.0 600.0,254.0 550.0,245.6 500.0,237.2 450.0,223.8 420.0,216.3 400.0,211.3 370.0,203.8" clip-path="url(#cleft)"/>
<g fill="#aaff00" clip-path="url(#cg6)"><polygon points="398.0,192.6 410.0,188.5 420.0,185.0 440.0,180.0 443.7,175.5 458.6,172.5 469.7,167.3 484.6,165.0 490.6,161.4 500.0,157.6 514.9,156.2 523.0,148.8 544.6,148.3 546.8,140.2 573.6,139.7 579.5,137.5 586.2,131.6 615.0,131.2 621.0,129.7 629.3,122.9 700.7,122.1 704.0,114.3 786.0,114.2 790.0,120.7 800.0,121.6 839.0,122.9 843.0,128.0 869.0,130.7 873.0,135.3 880.6,138.5 896.0,139.8 900.0,144.4 905.0,146.0 922.5,148.8 924.7,155.2 939.0,157.8 941.6,161.7 956.0,165.6 958.5,169.5 979.3,175.4 982.0,181.2 995.6,183.8 996.9,191.6 983.2,194.2 976.7,198.8 957.2,203.3 953.3,207.2 939.0,211.1 926.0,215.0 923.4,220.0 907.5,221.0 900.0,225.4 899.0,227.4 883.0,229.3 871.0,231.3 866.0,236.5 837.7,238.4 827.0,245.0 800.0,245.6 783.0,249.0 778.0,253.7 610.0,253.7 597.5,246.2 561.0,244.3 557.2,238.4 524.7,235.8 515.6,228.7 500.0,228.0 489.0,227.0 483.2,220.6 458.5,218.0 452.0,212.1 430.0,209.5 423.4,203.0 400.0,201.7" transform="translate(-6.5,-9.5)"/><polygon points="398.0,192.6 410.0,188.5 420.0,185.0 440.0,180.0 443.7,175.5 458.6,172.5 469.7,167.3 484.6,165.0 490.6,161.4 500.0,157.6 514.9,156.2 523.0,148.8 544.6,148.3 546.8,140.2 573.6,139.7 579.5,137.5 586.2,131.6 615.0,131.2 621.0,129.7 629.3,122.9 700.7,122.1 704.0,114.3 786.0,114.2 790.0,120.7 800.0,121.6 839.0,122.9 843.0,128.0 869.0,130.7 873.0,135.3 880.6,138.5 896.0,139.8 900.0,144.4 905.0,146.0 922.5,148.8 924.7,155.2 939.0,157.8 941.6,161.7 956.0,165.6 958.5,169.5 979.3,175.4 982.0,181.2 995.6,183.8 996.9,191.6 983.2,194.2 976.7,198.8 957.2,203.3 953.3,207.2 939.0,211.1 926.0,215.0 923.4,220.0 907.5,221.0 900.0,225.4 899.0,227.4 883.0,229.3 871.0,231.3 866.0,236.5 837.7,238.4 827.0,245.0 800.0,245.6 783.0,249.0 778.0,253.7 610.0,253.7 597.5,246.2 561.0,244.3 557.2,238.4 524.7,235.8 515.6,228.7 500.0,228.0 489.0,227.0 483.2,220.6 458.5,218.0 452.0,212.1 430.0,209.5 423.4,203.0 400.0,201.7" transform="translate(-6.5,9.5)"/><polygon points="398.0,192.6 410.0,188.5 420.0,185.0 440.0,180.0 443.7,175.5 458.6,172.5 469.7,167.3 484.6,165.0 490.6,161.4 500.0,157.6 514.9,156.2 523.0,148.8 544.6,148.3 546.8,140.2 573.6,139.7 579.5,137.5 586.2,131.6 615.0,131.2 621.0,129.7 629.3,122.9 700.7,122.1 704.0,114.3 786.0,114.2 790.0,120.7 800.0,121.6 839.0,122.9 843.0,128.0 869.0,130.7 873.0,135.3 880.6,138.5 896.0,139.8 900.0,144.4 905.0,146.0 922.5,148.8 924.7,155.2 939.0,157.8 941.6,161.7 956.0,165.6 958.5,169.5 979.3,175.4 982.0,181.2 995.6,183.8 996.9,191.6 983.2,194.2 976.7,198.8 957.2,203.3 953.3,207.2 939.0,211.1 926.0,215.0 923.4,220.0 907.5,221.0 900.0,225.4 899.0,227.4 883.0,229.3 871.0,231.3 866.0,236.5 837.7,238.4 827.0,245.0 800.0,245.6 783.0,249.0 778.0,253.7 610.0,253.7 597.5,246.2 561.0,244.3 557.2,238.4 524.7,235.8 515.6,228.7 500.0,228.0 489.0,227.0 483.2,220.6 458.5,218.0 452.0,212.1 430.0,209.5 423.4,203.0 400.0,201.7" transform="translate(6.5,-9.5)"/><polygon points="398.0,192.6 410.0,188.5 420.0,185.0 440.0,180.0 443.7,175.5 458.6,172.5 469.7,167.3 484.6,165.0 490.6,161.4 500.0,157.6 514.9,156.2 523.0,148.8 544.6,148.3 546.8,140.2 573.6,139.7 579.5,137.5 586.2,131.6 615.0,131.2 621.0,129.7 629.3,122.9 700.7,122.1 704.0,114.3 786.0,114.2 790.0,120.7 800.0,121.6 839.0,122.9 843.0,128.0 869.0,130.7 873.0,135.3 880.6,138.5 896.0,139.8 900.0,144.4 905.0,146.0 922.5,148.8 924.7,155.2 939.0,157.8 941.6,161.7 956.0,165.6 958.5,169.5 979.3,175.4 982.0,181.2 995.6,183.8 996.9,191.6 983.2,194.2 976.7,198.8 957.2,203.3 953.3,207.2 939.0,211.1 926.0,215.0 923.4,220.0 907.5,221.0 900.0,225.4 899.0,227.4 883.0,229.3 871.0,231.3 866.0,236.5 837.7,238.4 827.0,245.0 800.0,245.6 783.0,249.0 778.0,253.7 610.0,253.7 597.5,246.2 561.0,244.3 557.2,238.4 524.7,235.8 515.6,228.7 500.0,228.0 489.0,227.0 483.2,220.6 458.5,218.0 452.0,212.1 430.0,209.5 423.4,203.0 400.0,201.7" transform="translate(6.5,9.5)"/></g>
<polygon fill="#00f000" points="356.4,192.6 370.0,187.0 400.0,178.3 420.0,173.3 450.0,161.3 500.0,148.4 550.0,132.5 600.0,122.8 650.0,116.0 700.0,113.6 750.0,113.2 800.0,113.8 850.0,121.6 900.0,132.8 925.0,141.5 950.0,150.9 975.0,163.3 1000.0,169.6 1012.0,173.0 1012.0,198.0 1000.0,201.4 950.0,216.5 900.0,234.0 850.0,243.5 800.0,253.0 778.0,258.0 750.0,261.8 700.0,261.8 650.0,261.5 620.0,258.0 600.0,253.0 550.0,244.5 500.0,235.5 450.0,221.5 420.0,213.8 400.0,208.7 370.0,199.5" clip-path="url(#cleft)"/>
<g fill="#00f000" clip-path="url(#cg7)"><polygon points="398.0,192.6 410.0,188.5 420.0,185.0 440.0,180.0 443.7,175.5 458.6,172.5 469.7,167.3 484.6,165.0 490.6,161.4 500.0,157.6 514.9,156.2 523.0,148.8 544.6,148.3 546.8,140.2 573.6,139.7 579.5,137.5 586.2,131.6 615.0,131.2 621.0,129.7 629.3,122.9 700.7,122.1 704.0,114.3 786.0,114.2 790.0,120.7 800.0,121.6 839.0,122.9 843.0,128.0 869.0,130.7 873.0,135.3 880.6,138.5 896.0,139.8 900.0,144.4 905.0,146.0 922.5,148.8 924.7,155.2 939.0,157.8 941.6,161.7 956.0,165.6 958.5,169.5 979.3,175.4 982.0,181.2 995.6,183.8 996.9,191.6 983.2,194.2 976.7,198.8 957.2,203.3 953.3,207.2 939.0,211.1 926.0,215.0 923.4,220.0 907.5,221.0 900.0,225.4 899.0,227.4 883.0,229.3 871.0,231.3 866.0,236.5 837.7,238.4 827.0,245.0 800.0,245.6 783.0,249.0 778.0,253.7 610.0,253.7 597.5,246.2 561.0,244.3 557.2,238.4 524.7,235.8 515.6,228.7 500.0,228.0 489.0,227.0 483.2,220.6 458.5,218.0 452.0,212.1 430.0,209.5 423.4,203.0 400.0,201.7" transform="translate(-5,-7.5)"/><polygon points="398.0,192.6 410.0,188.5 420.0,185.0 440.0,180.0 443.7,175.5 458.6,172.5 469.7,167.3 484.6,165.0 490.6,161.4 500.0,157.6 514.9,156.2 523.0,148.8 544.6,148.3 546.8,140.2 573.6,139.7 579.5,137.5 586.2,131.6 615.0,131.2 621.0,129.7 629.3,122.9 700.7,122.1 704.0,114.3 786.0,114.2 790.0,120.7 800.0,121.6 839.0,122.9 843.0,128.0 869.0,130.7 873.0,135.3 880.6,138.5 896.0,139.8 900.0,144.4 905.0,146.0 922.5,148.8 924.7,155.2 939.0,157.8 941.6,161.7 956.0,165.6 958.5,169.5 979.3,175.4 982.0,181.2 995.6,183.8 996.9,191.6 983.2,194.2 976.7,198.8 957.2,203.3 953.3,207.2 939.0,211.1 926.0,215.0 923.4,220.0 907.5,221.0 900.0,225.4 899.0,227.4 883.0,229.3 871.0,231.3 866.0,236.5 837.7,238.4 827.0,245.0 800.0,245.6 783.0,249.0 778.0,253.7 610.0,253.7 597.5,246.2 561.0,244.3 557.2,238.4 524.7,235.8 515.6,228.7 500.0,228.0 489.0,227.0 483.2,220.6 458.5,218.0 452.0,212.1 430.0,209.5 423.4,203.0 400.0,201.7" transform="translate(-5,7.5)"/><polygon points="398.0,192.6 410.0,188.5 420.0,185.0 440.0,180.0 443.7,175.5 458.6,172.5 469.7,167.3 484.6,165.0 490.6,161.4 500.0,157.6 514.9,156.2 523.0,148.8 544.6,148.3 546.8,140.2 573.6,139.7 579.5,137.5 586.2,131.6 615.0,131.2 621.0,129.7 629.3,122.9 700.7,122.1 704.0,114.3 786.0,114.2 790.0,120.7 800.0,121.6 839.0,122.9 843.0,128.0 869.0,130.7 873.0,135.3 880.6,138.5 896.0,139.8 900.0,144.4 905.0,146.0 922.5,148.8 924.7,155.2 939.0,157.8 941.6,161.7 956.0,165.6 958.5,169.5 979.3,175.4 982.0,181.2 995.6,183.8 996.9,191.6 983.2,194.2 976.7,198.8 957.2,203.3 953.3,207.2 939.0,211.1 926.0,215.0 923.4,220.0 907.5,221.0 900.0,225.4 899.0,227.4 883.0,229.3 871.0,231.3 866.0,236.5 837.7,238.4 827.0,245.0 800.0,245.6 783.0,249.0 778.0,253.7 610.0,253.7 597.5,246.2 561.0,244.3 557.2,238.4 524.7,235.8 515.6,228.7 500.0,228.0 489.0,227.0 483.2,220.6 458.5,218.0 452.0,212.1 430.0,209.5 423.4,203.0 400.0,201.7" transform="translate(5,-7.5)"/><polygon points="398.0,192.6 410.0,188.5 420.0,185.0 440.0,180.0 443.7,175.5 458.6,172.5 469.7,167.3 484.6,165.0 490.6,161.4 500.0,157.6 514.9,156.2 523.0,148.8 544.6,148.3 546.8,140.2 573.6,139.7 579.5,137.5 586.2,131.6 615.0,131.2 621.0,129.7 629.3,122.9 700.7,122.1 704.0,114.3 786.0,114.2 790.0,120.7 800.0,121.6 839.0,122.9 843.0,128.0 869.0,130.7 873.0,135.3 880.6,138.5 896.0,139.8 900.0,144.4 905.0,146.0 922.5,148.8 924.7,155.2 939.0,157.8 941.6,161.7 956.0,165.6 958.5,169.5 979.3,175.4 982.0,181.2 995.6,183.8 996.9,191.6 983.2,194.2 976.7,198.8 957.2,203.3 953.3,207.2 939.0,211.1 926.0,215.0 923.4,220.0 907.5,221.0 900.0,225.4 899.0,227.4 883.0,229.3 871.0,231.3 866.0,236.5 837.7,238.4 827.0,245.0 800.0,245.6 783.0,249.0 778.0,253.7 610.0,253.7 597.5,246.2 561.0,244.3 557.2,238.4 524.7,235.8 515.6,228.7 500.0,228.0 489.0,227.0 483.2,220.6 458.5,218.0 452.0,212.1 430.0,209.5 423.4,203.0 400.0,201.7" transform="translate(5,7.5)"/></g>
<polygon fill="#00ffff" points="610.0,254.0 640.0,254.0 628.0,259.0 612.0,260.0"/>
<polygon fill="#00ffff" points="672.0,254.0 730.0,254.0 712.0,261.5 690.0,262.0 676.0,259.0"/>
<polygon fill="#00ffff" points="379.0,192.6 400.0,186.8 420.0,181.0 440.0,174.7 455.0,167.3 474.0,159.5 488.0,157.3 500.0,154.7 523.0,147.6 546.0,139.2 580.0,132.0 586.0,130.3 621.0,128.5 629.0,122.2 684.0,121.0 702.0,114.6 704.0,113.9 786.0,113.9 790.0,115.0 800.0,116.0 839.0,121.5 869.0,129.5 880.0,135.0 896.0,138.5 922.0,147.3 939.0,153.5 950.0,157.3 958.0,162.5 975.0,170.6 995.0,177.7 1004.0,181.0 1004.0,193.0 997.0,194.0 976.7,199.8 953.3,208.2 923.4,221.0 899.0,228.4 866.0,237.5 827.0,246.0 800.0,250.0 778.0,254.5 610.0,254.5 561.0,245.3 524.7,236.8 489.0,228.0 458.5,219.0 430.0,210.5 400.0,202.5" clip-path="url(#cy)"/>
<polygon fill="#00bfff" points="388.5,192.6 404.0,187.0 420.0,183.0 420.0,185.0 410.0,188.5 398.0,192.6 400.0,200.0 404.0,203.5 396.0,199.0"/>
<polygon fill="#0080ff" points="398.0,192.6 410.0,188.5 420.0,185.0 440.0,180.0 443.7,175.5 458.6,172.5 469.7,167.3 484.6,165.0 490.6,161.4 500.0,157.6 514.9,156.2 523.0,148.8 544.6,148.3 546.8,140.2 573.6,139.7 579.5,137.5 586.2,131.6 615.0,131.2 621.0,129.7 629.3,122.9 700.7,122.1 704.0,114.3 786.0,114.2 790.0,120.7 800.0,121.6 839.0,122.9 843.0,128.0 869.0,130.7 873.0,135.3 880.6,138.5 896.0,139.8 900.0,144.4 905.0,146.0 922.5,148.8 924.7,155.2 939.0,157.8 941.6,161.7 956.0,165.6 958.5,169.5 979.3,175.4 982.0,181.2 995.6,183.8 996.9,191.6 983.2,194.2 976.7,198.8 957.2,203.3 953.3,207.2 939.0,211.1 926.0,215.0 923.4,220.0 907.5,221.0 900.0,225.4 899.0,227.4 883.0,229.3 871.0,231.3 866.0,236.5 837.7,238.4 827.0,245.0 800.0,245.6 783.0,249.0 778.0,253.7 610.0,253.7 597.5,246.2 561.0,244.3 557.2,238.4 524.7,235.8 515.6,228.7 500.0,228.0 489.0,227.0 483.2,220.6 458.5,218.0 452.0,212.1 430.0,209.5 423.4,203.0 400.0,201.7"/>
</g>
<g stroke="#000" stroke-width="0.5" fill="none">
<path d="M208.8 62V323.2" stroke="#700" stroke-width="0.4"/>
<path d="M209.0 60.4V62" stroke="#333" stroke-width="0.45"/>
<path d="M302.6 60.4V62" stroke="#333" stroke-width="0.45"/>
<path d="M396.2 60.4V62" stroke="#333" stroke-width="0.45"/>
<path d="M489.8 60.4V62" stroke="#333" stroke-width="0.45"/>
<path d="M583.4 60.4V62" stroke="#333" stroke-width="0.45"/>
<path d="M677.0 60.4V62" stroke="#333" stroke-width="0.45"/>
<path d="M770.6 60.4V62" stroke="#333" stroke-width="0.45"/>
<path d="M864.2 60.4V62" stroke="#333" stroke-width="0.45"/>
<path d="M957.8 60.4V62" stroke="#333" stroke-width="0.45"/>
<path d="M227.7 61.2V62" stroke-width="0.35" stroke="#a05050"/>
<path d="M246.4 61.2V62" stroke-width="0.35" stroke="#a05050"/>
<path d="M265.2 61.2V62" stroke-width="0.35" stroke="#a05050"/>
<path d="M283.9 61.2V62" stroke-width="0.35" stroke="#a05050"/>
<path d="M321.3 61.2V62" stroke-width="0.35" stroke="#a05050"/>
<path d="M340.0 61.2V62" stroke-width="0.35" stroke="#a05050"/>
<path d="M358.8 61.2V62" stroke-width="0.35" stroke="#a05050"/>
<path d="M377.5 61.2V62" stroke-width="0.35" stroke="#a05050"/>
<path d="M414.9 61.2V62" stroke-width="0.35" stroke="#a05050"/>
<path d="M433.6 61.2V62" stroke-width="0.35" stroke="#a05050"/>
<path d="M452.4 61.2V62" stroke-width="0.35" stroke="#a05050"/>
<path d="M471.1 61.2V62" stroke-width="0.35" stroke="#a05050"/>
<path d="M508.5 61.2V62" stroke-width="0.35" stroke="#a05050"/>
<path d="M527.2 61.2V62" stroke-width="0.35" stroke="#a05050"/>
<path d="M546.0 61.2V62" stroke-width="0.35" stroke="#a05050"/>
<path d="M564.7 61.2V62" stroke-width="0.35" stroke="#a05050"/>
<path d="M602.1 61.2V62" stroke-width="0.35" stroke="#a05050"/>
<path d="M620.8 61.2V62" stroke-width="0.35" stroke="#a05050"/>
<path d="M639.6 61.2V62" stroke-width="0.35" stroke="#a05050"/>
<path d="M658.3 61.2V62" stroke-width="0.35" stroke="#a05050"/>
<path d="M695.7 61.2V62" stroke-width="0.35" stroke="#a05050"/>
<path d="M714.4 61.2V62" stroke-width="0.35" stroke="#a05050"/>
<path d="M733.2 61.2V62" stroke-width="0.35" stroke="#a05050"/>
<path d="M751.9 61.2V62" stroke-width="0.35" stroke="#a05050"/>
<path d="M789.3 61.2V62" stroke-width="0.35" stroke="#a05050"/>
<path d="M808.0 61.2V62" stroke-width="0.35" stroke="#a05050"/>
<path d="M826.8 61.2V62" stroke-width="0.35" stroke="#a05050"/>
<path d="M845.5 61.2V62" stroke-width="0.35" stroke="#a05050"/>
<path d="M882.9 61.2V62" stroke-width="0.35" stroke="#a05050"/>
<path d="M901.6 61.2V62" stroke-width="0.35" stroke="#a05050"/>
<path d="M920.4 61.2V62" stroke-width="0.35" stroke="#a05050"/>
<path d="M939.1 61.2V62" stroke-width="0.35" stroke="#a05050"/>
<path d="M976.5 61.2V62" stroke-width="0.35" stroke="#a05050"/>
<path d="M995.2 61.2V62" stroke-width="0.35" stroke="#a05050"/>
<path d="M207.4 105.5H209" stroke="#333" stroke-width="0.45"/>
<path d="M207.4 159.9H209" stroke="#333" stroke-width="0.45"/>
<path d="M207.4 214.2H209" stroke="#333" stroke-width="0.45"/>
<path d="M207.4 268.6H209" stroke="#333" stroke-width="0.45"/>
<path d="M207.4 323.0H209" stroke="#333" stroke-width="0.45"/>
<path d="M208.1 323.0H209" stroke-width="0.35" stroke="#a05050"/>
<path d="M208.1 312.1H209" stroke-width="0.35" stroke="#a05050"/>
<path d="M208.1 301.2H209" stroke-width="0.35" stroke="#a05050"/>
<path d="M208.1 290.4H209" stroke-width="0.35" stroke="#a05050"/>
<path d="M208.1 279.5H209" stroke-width="0.35" stroke="#a05050"/>
<path d="M208.1 268.6H209" stroke-width="0.35" stroke="#a05050"/>
<path d="M208.1 257.8H209" stroke-width="0.35" stroke="#a05050"/>
<path d="M208.1 246.9H209" stroke-width="0.35" stroke="#a05050"/>
<path d="M208.1 236.0H209" stroke-width="0.35" stroke="#a05050"/>
<path d="M208.1 225.1H209" stroke-width="0.35" stroke="#a05050"/>
<path d="M208.1 214.2H209" stroke-width="0.35" stroke="#a05050"/>
<path d="M208.1 203.4H209" stroke-width="0.35" stroke="#a05050"/>
<path d="M208.1 192.5H209" stroke-width="0.35" stroke="#a05050"/>
<path d="M208.1 181.6H209" stroke-width="0.35" stroke="#a05050"/>
<path d="M208.1 170.8H209" stroke-width="0.35" stroke="#a05050"/>
<path d="M208.1 159.9H209" stroke-width="0.35" stroke="#a05050"/>
<path d="M208.1 149.0H209" stroke-width="0.35" stroke="#a05050"/>
<path d="M208.1 138.1H209" stroke-width="0.35" stroke="#a05050"/>
<path d="M208.1 127.3H209" stroke-width="0.35" stroke="#a05050"/>
<path d="M208.1 116.4H209" stroke-width="0.35" stroke="#a05050"/>
<path d="M208.1 105.5H209" stroke-width="0.35" stroke="#a05050"/>
<path d="M208.1 94.6H209" stroke-width="0.35" stroke="#a05050"/>
<path d="M208.1 83.8H209" stroke-width="0.35" stroke="#a05050"/>
<path d="M208.1 72.9H209" stroke-width="0.35" stroke="#a05050"/>
<path d="M208.1 62.0H209" stroke-width="0.35" stroke="#a05050"/>
</g>
<g font-family="'Liberation Sans',sans-serif" font-size="6.12" fill="#000" stroke="#000" stroke-width="0.18">
<text x="208.5" y="58.2" text-anchor="middle">-0.5</text>
<text x="302.1" y="58.2" text-anchor="middle">-0.4</text>
<text x="395.7" y="58.2" text-anchor="middle">-0.3</text>
<text x="489.3" y="58.2" text-anchor="middle">-0.2</text>
<text x="582.9" y="58.2" text-anchor="middle">-0.1</text>
<text x="676.5" y="58.2" text-anchor="middle">0</text>
<text x="770.1" y="58.2" text-anchor="middle">0.1</text>
<text x="863.7" y="58.2" text-anchor="middle">0.2</text>
<text x="957.3" y="58.2" text-anchor="middle">0.3</text>
<text x="205.8" y="107.7" text-anchor="end">80</text>
<text x="205.8" y="162.1" text-anchor="end">30</text>
<text x="205.8" y="216.4" text-anchor="end">-20</text>
<text x="205.8" y="270.8" text-anchor="end">-70</text>
<text x="205.8" y="325.2" text-anchor="end">-120</text>
<text x="677" y="49.6" text-anchor="middle" font-weight="bold">Unit Interval</text>
<text transform="translate(193.3 192.5) rotate(-90)" text-anchor="middle" font-weight="bold">Voltage (Codes)</text>
</g>
</svg>
<div class="t b" style="left:190px;top:339.00px;">Summary</div><div class="abs" style="left:190px;top:347.4px;width:115px;height:0.6px;background:#d2d2d2"></div>
<div class="t b" style="left:314px;top:339.00px;">Metrics</div><div class="abs" style="left:314px;top:347.4px;width:82px;height:0.6px;background:#d2d2d2"></div>
<div class="t b" style="left:404.4px;top:339.00px;">Settings</div><div class="abs" style="left:404.4px;top:347.4px;width:135.4px;height:0.6px;background:#d2d2d2"></div>
<div class="t " style="left:200.4px;top:353.70px;">Name:</div>
<div class="t " style="left:239.4px;top:353.70px;">SCAN_0</div>
<div class="t " style="left:200.4px;top:370.50px;">Description:</div>
<div class="t " style="left:239.4px;top:370.50px;">Scan 0</div>
<div class="t " style="left:200.4px;top:386.70px;">Started:</div>
<div class="t " style="left:239.4px;top:386.70px;">2024-Dec-21 20:53:11</div>
<div class="t " style="left:200.4px;top:403.20px;">Ended:</div>
<div class="t " style="left:239.4px;top:403.20px;">2024-Dec-21 20:53:16</div>
<div class="t " style="left:324.6px;top:353.70px;">Open area:</div>
<div class="t " style="left:362.3px;top:353.70px;">3496</div>
<div class="t " style="left:324.6px;top:370.50px;">Open UI %:</div>
<div class="t " style="left:362.3px;top:370.50px;">61.54</div>
<div class="t " style="left:415px;top:353.70px;">Link settings:</div>
<div class="t " style="left:479px;top:353.70px;">N/A</div>
<div class="t " style="left:415px;top:370.50px;">Horizontal increment:</div>
<div class="t " style="left:479px;top:370.50px;">1</div>
<div class="t " style="left:415px;top:386.70px;">Horizontal range:</div>
<div class="t " style="left:479px;top:386.70px;">-0.500 UI to 0.500 UI</div>
<div class="t " style="left:415px;top:403.20px;">Vertical increment:</div>
<div class="t " style="left:479px;top:403.20px;">8</div>
<div class="t " style="left:415px;top:419.60px;">Vertical range:</div>
<div class="t " style="left:479px;top:419.60px;">100%</div>
<div class="abs" style="left:0.8px;top:446px;width:1010px;height:100px;border-top:2.1px solid #4b7abf;border-left:2.3px solid #4b7abf;background:#fff"></div>
<div class="abs" style="left:3.1px;top:448.1px;width:1000px;height:14.5px;background:#f0f0f0"></div>
<div class="abs" style="left:90px;top:448.1px;width:65.2px;height:14.6px;background:#fff"></div>
<div class="abs" style="left:48.4px;top:449.4px;width:0.7px;height:12px;background:#d3d3d3"></div>
<div class="abs" style="left:88.9px;top:449.4px;width:0.7px;height:12px;background:#d3d3d3"></div>
<div class="abs" style="left:212.2px;top:449.4px;width:0.7px;height:12px;background:#d3d3d3"></div>
<div class="t b" style="left:5.6px;top:451.20px;color:#8e8e8e">Tcl Console</div>
<div class="t b" style="left:51.6px;top:451.20px;color:#8e8e8e">Messages</div>
<div class="t b" style="left:92.6px;top:451.20px;">Serial I/O Links</div>
<svg class="abs" style="left:148.3px;top:453.8px" width="3.4" height="3.4" viewBox="0 0 3.4 3.4"><path d="M0.2 0.2L3.2 3.2M3.2 0.2L0.2 3.2" stroke="#6a6a6a" stroke-width="0.6"/></svg>
<div class="t b" style="left:157.6px;top:451.20px;color:#8e8e8e">Serial I/O Scans</div>
<svg class="abs" style="left:7.699999999999999px;top:467.20000000000005px" width="7" height="6.8" viewBox="0 0 7 6.8"><circle cx="3" cy="2.9" r="2.3" fill="none" stroke="#1c3f7c" stroke-width="1.05"/><path d="M4.8 4.7L6.2 6.1" stroke="#1c3f7c" stroke-width="1.3" stroke-linecap="round"/></svg>
<svg class="abs" style="left:25.2px;top:467.5px" width="6" height="6.2" viewBox="0 0 6 6.2"><path d="M0.7 0.35H5.3M0.7 5.85H5.3" stroke="#1c3f7c" stroke-width="0.7"/><path d="M1 0.7H5L3 2.7ZM1 5.5H5L3 3.5Z" fill="#1c3f7c"/><path d="M0.1 3.1H5.9" stroke="#1c3f7c" stroke-width="0.75"/></svg>
<svg class="abs" style="left:42.699999999999996px;top:467.3px" width="5.4" height="6.6" viewBox="0 0 5.4 6.6"><path d="M2.7 0.1C4.6 1 5.2 2.3 5.2 3.3C5.2 4.3 4.6 5.6 2.7 6.5C0.8 5.6 0.2 4.3 0.2 3.3C0.2 2.3 0.8 1 2.7 0.1Z" fill="#1c3f7c"/><path d="M0.2 3.3H5.2" stroke="#8ea3cc" stroke-width="0.9"/></svg>
<svg class="abs" style="left:58.2px;top:467.40000000000003px" width="7.4" height="7.4" viewBox="0 0 7.4 7.4"><path d="M3.1 0.2V6.2M0.1 3.2H6.1" stroke="#1c3f7c" stroke-width="1.15"/><path d="M5.6 6.2H7.2L6.4 7.2Z" fill="#333"/></svg>
<div class="vsep" style="left:19.4px;top:465.4px;height:10.6px"></div>
<div class="vsep" style="left:36.4px;top:465.4px;height:10.6px"></div>
<div class="vsep" style="left:53.6px;top:465.4px;height:10.6px"></div>
<div class="vsep" style="left:68.3px;top:465.4px;height:10.6px"></div>
<div class="hdr" style="left:3.1px;top:478.8px;width:1000px;height:12.9px"></div>
<div class="colsep" style="left:90.5px;top:478.8px;height:12.9px;background:#dfdfdf"></div>
<div class="colsep" style="left:90.5px;top:491.7px;height:37.8px;background:#f3f3f3"></div>
<div class="colsep" style="left:196px;top:478.8px;height:12.9px;background:#dfdfdf"></div>
<div class="colsep" style="left:196px;top:491.7px;height:37.8px;background:#f3f3f3"></div>
<div class="colsep" style="left:302px;top:478.8px;height:12.9px;background:#dfdfdf"></div>
<div class="colsep" style="left:302px;top:491.7px;height:37.8px;background:#f3f3f3"></div>
<div class="colsep" style="left:342px;top:478.8px;height:12.9px;background:#dfdfdf"></div>
<div class="colsep" style="left:342px;top:491.7px;height:37.8px;background:#f3f3f3"></div>
<div class="colsep" style="left:374.2px;top:478.8px;height:12.9px;background:#dfdfdf"></div>
<div class="colsep" style="left:374.2px;top:491.7px;height:37.8px;background:#f3f3f3"></div>
<div class="colsep" style="left:402px;top:478.8px;height:12.9px;background:#dfdfdf"></div>
<div class="colsep" style="left:402px;top:491.7px;height:37.8px;background:#f3f3f3"></div>
<div class="colsep" style="left:435.6px;top:478.8px;height:12.9px;background:#dfdfdf"></div>
<div class="colsep" style="left:435.6px;top:491.7px;height:37.8px;background:#f3f3f3"></div>
<div class="colsep" style="left:482px;top:478.8px;height:12.9px;background:#dfdfdf"></div>
<div class="colsep" style="left:482px;top:491.7px;height:37.8px;background:#f3f3f3"></div>
<div class="colsep" style="left:545px;top:478.8px;height:12.9px;background:#dfdfdf"></div>
<div class="colsep" style="left:545px;top:491.7px;height:37.8px;background:#f3f3f3"></div>
<div class="colsep" style="left:608.8px;top:478.8px;height:12.9px;background:#dfdfdf"></div>
<div class="colsep" style="left:608.8px;top:491.7px;height:37.8px;background:#f3f3f3"></div>
<div class="colsep" style="left:673.8px;top:478.8px;height:12.9px;background:#dfdfdf"></div>
<div class="colsep" style="left:673.8px;top:491.7px;height:37.8px;background:#f3f3f3"></div>
<div class="colsep" style="left:738.8px;top:478.8px;height:12.9px;background:#dfdfdf"></div>
<div class="colsep" style="left:738.8px;top:491.7px;height:37.8px;background:#f3f3f3"></div>
<div class="colsep" style="left:802px;top:478.8px;height:12.9px;background:#dfdfdf"></div>
<div class="colsep" style="left:802px;top:491.7px;height:37.8px;background:#f3f3f3"></div>
<div class="colsep" style="left:851.2px;top:478.8px;height:12.9px;background:#dfdfdf"></div>
<div class="colsep" style="left:851.2px;top:491.7px;height:37.8px;background:#f3f3f3"></div>
<div class="colsep" style="left:892.6px;top:478.8px;height:12.9px;background:#dfdfdf"></div>
<div class="colsep" style="left:892.6px;top:491.7px;height:37.8px;background:#f3f3f3"></div>
<div class="colsep" style="left:930.6px;top:478.8px;height:12.9px;background:#dfdfdf"></div>
<div class="colsep" style="left:930.6px;top:491.7px;height:37.8px;background:#f3f3f3"></div>
<div class="colsep" style="left:968.3px;top:478.8px;height:12.9px;background:#dfdfdf"></div>
<div class="colsep" style="left:968.3px;top:491.7px;height:37.8px;background:#f3f3f3"></div>
<div class="t " style="left:6.8px;top:481.60px;">Name</div>
<div class="t " style="left:94.4px;top:481.60px;">TX</div>
<div class="t " style="left:199.6px;top:481.60px;">RX</div>
<div class="t " style="left:306.2px;top:481.60px;">Status</div>
<div class="t " style="left:346.2px;top:481.60px;">Bits</div>
<div class="t " style="left:377.6px;top:481.60px;">Errors</div>
<div class="t " style="left:406.2px;top:481.60px;">BER</div>
<div class="t " style="left:439.4px;top:481.60px;">BERT Reset</div>
<div class="t " style="left:486.2px;top:481.60px;">TX Pattern</div>
<div class="t " style="left:549.2px;top:481.60px;">RX Pattern</div>
<div class="t " style="left:613.2px;top:481.60px;">TX Pre-Cursor</div>
<div class="t " style="left:678px;top:481.60px;">TX Post-Cursor</div>
<div class="t " style="left:742.6px;top:481.60px;">TX Diff Swing</div>
<div class="t " style="left:806.2px;top:481.60px;">DFE Enabled</div>
<div class="t " style="left:855.2px;top:481.60px;">Inject Error</div>
<div class="t " style="left:897px;top:481.60px;">TX Reset</div>
<div class="t " style="left:934.6px;top:481.60px;">RX Reset</div>
<div class="t " style="left:972px;top:481.60px;">RX PLL Status</div>
<div class="abs" style="left:3.1px;top:504.3px;width:1000px;height:12.7px;background:#cadcfb"></div>
<div class="colsep" style="left:90.5px;top:504.3px;height:12.7px;background:#dde8fa"></div>
<div class="colsep" style="left:196px;top:504.3px;height:12.7px;background:#dde8fa"></div>
<div class="colsep" style="left:302px;top:504.3px;height:12.7px;background:#dde8fa"></div>
<div class="colsep" style="left:342px;top:504.3px;height:12.7px;background:#dde8fa"></div>
<div class="colsep" style="left:374.2px;top:504.3px;height:12.7px;background:#dde8fa"></div>
<div class="colsep" style="left:402px;top:504.3px;height:12.7px;background:#dde8fa"></div>
<div class="colsep" style="left:435.6px;top:504.3px;height:12.7px;background:#dde8fa"></div>
<div class="colsep" style="left:482px;top:504.3px;height:12.7px;background:#dde8fa"></div>
<div class="colsep" style="left:545px;top:504.3px;height:12.7px;background:#dde8fa"></div>
<div class="colsep" style="left:608.8px;top:504.3px;height:12.7px;background:#dde8fa"></div>
<div class="colsep" style="left:673.8px;top:504.3px;height:12.7px;background:#dde8fa"></div>
<div class="colsep" style="left:738.8px;top:504.3px;height:12.7px;background:#dde8fa"></div>
<div class="colsep" style="left:802px;top:504.3px;height:12.7px;background:#dde8fa"></div>
<div class="colsep" style="left:851.2px;top:504.3px;height:12.7px;background:#dde8fa"></div>
<div class="colsep" style="left:892.6px;top:504.3px;height:12.7px;background:#dde8fa"></div>
<div class="colsep" style="left:930.6px;top:504.3px;height:12.7px;background:#dde8fa"></div>
<div class="colsep" style="left:968.3px;top:504.3px;height:12.7px;background:#dde8fa"></div>
<div class="hline" style="left:2.8px;top:504px;width:1000px"></div>
<div class="hline" style="left:2.8px;top:529.4px;width:1000px"></div>
<div class="abs" style="left:302.4px;top:517.2px;width:39.4px;height:12.2px;background:#d9f2d0"></div>
<div class="abs" style="left:968.8px;top:517.2px;width:40px;height:12.2px;background:#d9f2d0"></div>
<svg class="abs" style="left:15.4px;top:496.0px" width="4.6" height="4" viewBox="0 0 4.6 4"><path d="M0.3 3.7V0.6H1.8L2.3 1.2H4.3V3.7Z" fill="#f3f3f3" stroke="#b5b5b5" stroke-width="0.5"/></svg>
<div class="t " style="left:23.8px;top:494.00px;">Ungrouped Links <span class="g">(0)</span></div>
<svg class="abs" style="left:5.8679999999999986px;top:509.522px" width="4.664000000000001" height="2.7560000000000002" viewBox="0 0 4.4 2.6"><path d="M0.3 0.3L2.2 2.2L4.1 0.3" fill="none" stroke="#909090" stroke-width="0.95"/></svg>
<svg class="abs" style="left:15.2px;top:508.4px" width="5.6" height="4.6" viewBox="0 0 5.6 4.6"><rect x="0.3" y="0.5" width="3" height="1.9" rx="0.95" fill="none" stroke="#a9a9a9" stroke-width="0.55" transform="rotate(35 1.8 1.45)"/><rect x="2.2" y="2.1" width="3" height="1.9" rx="0.95" fill="none" stroke="#a9a9a9" stroke-width="0.55" transform="rotate(35 3.7 3.05)"/></svg>
<div class="t " style="left:23.8px;top:506.70px;">Found Links (1)</div>
<svg class="abs" style="left:24px;top:520.9000000000001px" width="5.6" height="4.6" viewBox="0 0 5.6 4.6"><rect x="0.3" y="0.5" width="3" height="1.9" rx="0.95" fill="none" stroke="#a9a9a9" stroke-width="0.55" transform="rotate(35 1.8 1.45)"/><rect x="2.2" y="2.1" width="3" height="1.9" rx="0.95" fill="none" stroke="#a9a9a9" stroke-width="0.55" transform="rotate(35 3.7 3.05)"/></svg>
<div class="t " style="left:31.8px;top:519.20px;">Auto detected link 0</div>
<div class="t link" style="left:91.3px;top:519.20px;">Quad_228/MGT_X1Y4/TX (xczu15_0)</div>
<div class="t link" style="left:197.4px;top:519.20px;">Quad_228/MGT_X1Y4/RX (xczu15_0)</div>
<div class="t " style="left:302.8px;top:519.20px;">6.235 Gbps</div>
<div class="t " style="left:346.2px;top:519.20px;">4.024E11</div>
<div class="t" style="left:376px;top:519.2px;width:22px;text-align:right">0E0</div>
<div class="t " style="left:405.6px;top:519.20px;">2.485E-12</div>
<div class="t " style="left:969.4px;top:519.20px;">Locked</div>
<div class="btn" style="left:436.4px;top:505.45px;width:43.6px;border-color:#6b9be0;box-shadow:0 0 0 0.8px #a8c5ee">Reset</div>
<div class="t " style="left:486.2px;top:506.70px;">PRBS 7-bit</div>
<svg class="abs" style="left:534.3359999999999px;top:509.44399999999996px" width="4.928000000000001" height="2.9120000000000004" viewBox="0 0 4.4 2.6"><path d="M0.3 0.3L2.2 2.2L4.1 0.3" fill="none" stroke="#444" stroke-width="0.78"/></svg>
<div class="t " style="left:549.2px;top:506.70px;">PRBS 7-bit</div>
<svg class="abs" style="left:598.136px;top:509.44399999999996px" width="4.928000000000001" height="2.9120000000000004" viewBox="0 0 4.4 2.6"><path d="M0.3 0.3L2.2 2.2L4.1 0.3" fill="none" stroke="#444" stroke-width="0.78"/></svg>
<div class="t " style="left:613.2px;top:506.70px;">0.00 dB (00000)</div>
<svg class="abs" style="left:662.736px;top:509.44399999999996px" width="4.928000000000001" height="2.9120000000000004" viewBox="0 0 4.4 2.6"><path d="M0.3 0.3L2.2 2.2L4.1 0.3" fill="none" stroke="#444" stroke-width="0.78"/></svg>
<div class="t " style="left:678px;top:506.70px;">0.00 dB (00000)</div>
<svg class="abs" style="left:727.536px;top:509.44399999999996px" width="4.928000000000001" height="2.9120000000000004" viewBox="0 0 4.4 2.6"><path d="M0.3 0.3L2.2 2.2L4.1 0.3" fill="none" stroke="#444" stroke-width="0.78"/></svg>
<div class="t " style="left:742.6px;top:506.70px;">873 mV (11000)</div>
<svg class="abs" style="left:791.3359999999999px;top:509.44399999999996px" width="4.928000000000001" height="2.9120000000000004" viewBox="0 0 4.4 2.6"><path d="M0.3 0.3L2.2 2.2L4.1 0.3" fill="none" stroke="#444" stroke-width="0.78"/></svg>
<svg class="abs" style="left:822.9px;top:507.3px" width="6.8" height="6.8" viewBox="0 0 6.8 6.8"><rect x="0.35" y="0.35" width="6.1" height="6.1" rx="0.8" fill="#fff" stroke="#858585" stroke-width="0.65"/><path d="M1.6 3.5L2.9 4.9L5.3 1.9" fill="none" stroke="#222" stroke-width="0.85"/></svg>
<div class="btn" style="left:852.6px;top:505.45px;width:38px">Inject</div>
<div class="btn" style="left:894.6px;top:505.45px;width:34.2px">Reset</div>
<div class="btn" style="left:932.6px;top:505.45px;width:33.8px">Reset</div>
<div class="btn" style="left:436.4px;top:517.95px;width:43.6px;border-color:#a4a4a4">Reset</div>
<div class="t " style="left:486.2px;top:519.20px;">PRBS 7-bit</div>
<svg class="abs" style="left:534.3359999999999px;top:521.9440000000001px" width="4.928000000000001" height="2.9120000000000004" viewBox="0 0 4.4 2.6"><path d="M0.3 0.3L2.2 2.2L4.1 0.3" fill="none" stroke="#444" stroke-width="0.78"/></svg>
<div class="t " style="left:549.2px;top:519.20px;">PRBS 7-bit</div>
<svg class="abs" style="left:598.136px;top:521.9440000000001px" width="4.928000000000001" height="2.9120000000000004" viewBox="0 0 4.4 2.6"><path d="M0.3 0.3L2.2 2.2L4.1 0.3" fill="none" stroke="#444" stroke-width="0.78"/></svg>
<div class="t " style="left:613.2px;top:519.20px;">0.00 dB (00000)</div>
<svg class="abs" style="left:662.736px;top:521.9440000000001px" width="4.928000000000001" height="2.9120000000000004" viewBox="0 0 4.4 2.6"><path d="M0.3 0.3L2.2 2.2L4.1 0.3" fill="none" stroke="#444" stroke-width="0.78"/></svg>
<div class="t " style="left:678px;top:519.20px;">0.00 dB (00000)</div>
<svg class="abs" style="left:727.536px;top:521.9440000000001px" width="4.928000000000001" height="2.9120000000000004" viewBox="0 0 4.4 2.6"><path d="M0.3 0.3L2.2 2.2L4.1 0.3" fill="none" stroke="#444" stroke-width="0.78"/></svg>
<div class="t " style="left:742.6px;top:519.20px;">873 mV (11000)</div>
<svg class="abs" style="left:791.3359999999999px;top:521.9440000000001px" width="4.928000000000001" height="2.9120000000000004" viewBox="0 0 4.4 2.6"><path d="M0.3 0.3L2.2 2.2L4.1 0.3" fill="none" stroke="#444" stroke-width="0.78"/></svg>
<svg class="abs" style="left:822.9px;top:519.8000000000001px" width="6.8" height="6.8" viewBox="0 0 6.8 6.8"><rect x="0.35" y="0.35" width="6.1" height="6.1" rx="0.8" fill="#fff" stroke="#858585" stroke-width="0.65"/><path d="M1.6 3.5L2.9 4.9L5.3 1.9" fill="none" stroke="#222" stroke-width="0.85"/></svg>
<div class="btn" style="left:852.6px;top:517.95px;width:38px">Inject</div>
<div class="btn" style="left:894.6px;top:517.95px;width:34.2px">Reset</div>
<div class="btn" style="left:932.6px;top:517.95px;width:33.8px">Reset</div>
</div>
</body></html>
